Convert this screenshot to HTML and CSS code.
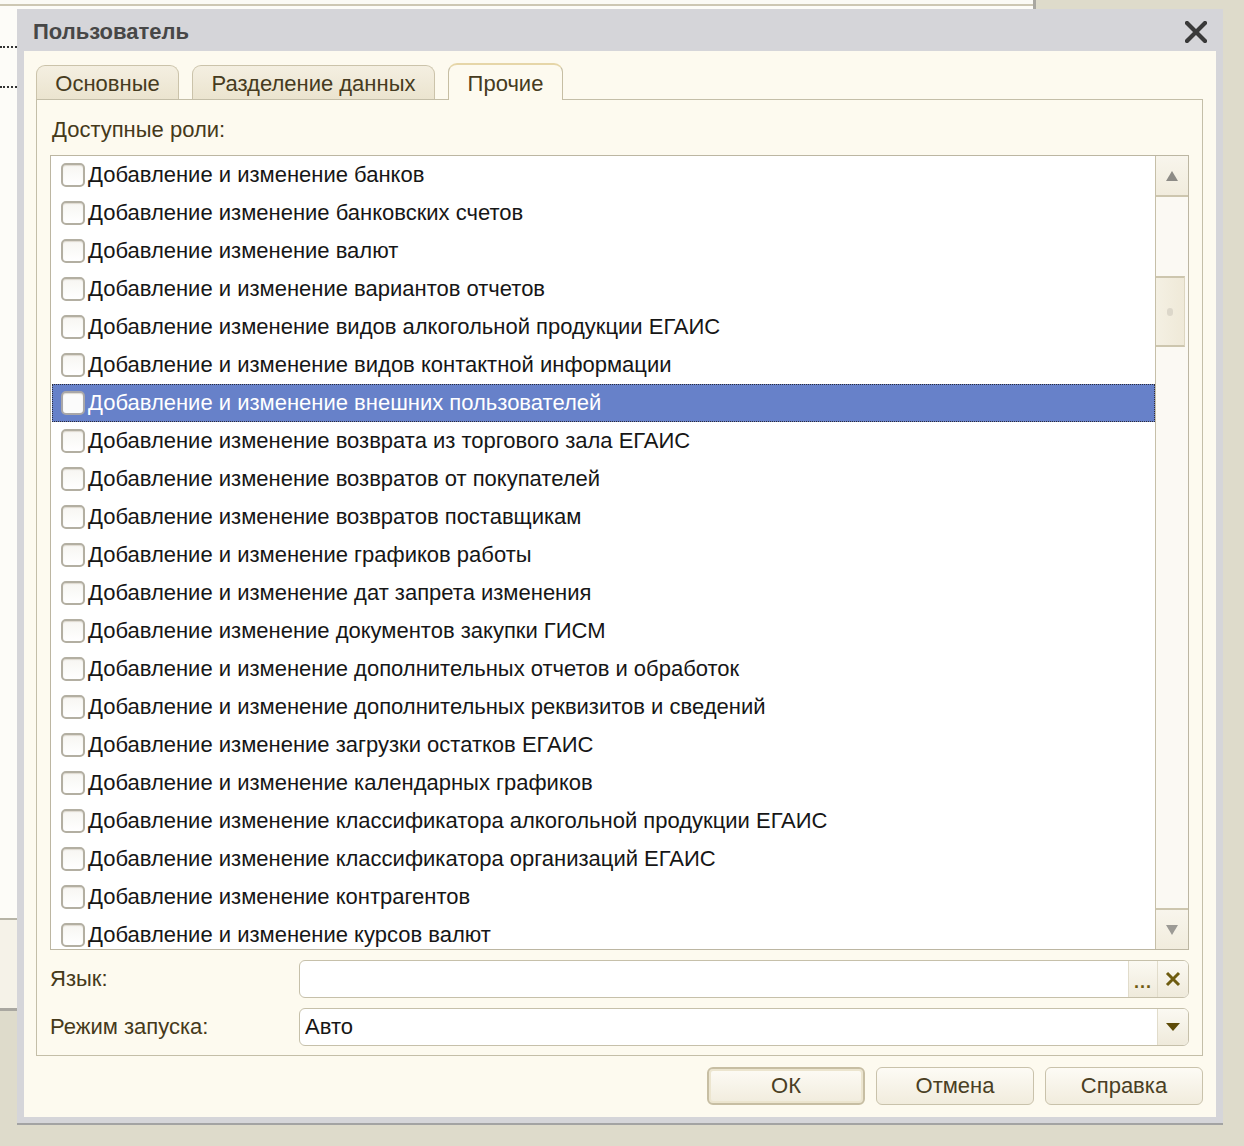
FILE: index.html
```html
<!DOCTYPE html>
<html lang="ru">
<head>
	<meta charset="UTF-8">
	<title>Пользователь</title>
	<link rel="stylesheet" href="styles.css">
</head>
<body>
	<!-- окно под диалогом -->
	<div class="backWindow">
		<div class="backTop"></div>
		<div class="backMain">
			<div class="treeDots"></div>
			<div class="treeDots"></div>
		</div>
		<div class="backFooter"></div>
	</div>

	<!-- Диалог -->
	<div class="dialog">
		<div class="titlebar">
			<span class="title">Пользователь</span>
			<svg class="closeIcon" width="22" height="22" viewBox="0 0 22 22">
				<path d="M2 2 L20 20 M20 2 L2 20" stroke="#3a3a3a" stroke-width="4.2" stroke-linecap="square"/>
			</svg>
		</div>

		<div class="content">
			<div class="tabs">
				<div class="tab tab-main">Основные</div>
				<div class="tab tab-data">Разделение данных</div>
				<div class="tab tab-other active">Прочие</div>
			</div>

			<div class="panel">
				<div class="panelLabel">Доступные роли:</div>

				<div class="roleList">
					<ul class="rows">
						<li><span class="check"></span>Добавление и изменение банков</li>
						<li><span class="check"></span>Добавление изменение банковских счетов</li>
						<li><span class="check"></span>Добавление изменение валют</li>
						<li><span class="check"></span>Добавление и изменение вариантов отчетов</li>
						<li><span class="check"></span>Добавление изменение видов алкогольной продукции ЕГАИС</li>
						<li><span class="check"></span>Добавление и изменение видов контактной информации</li>
						<li class="selected"><span class="check"></span>Добавление и изменение внешних пользователей</li>
						<li><span class="check"></span>Добавление изменение возврата из торгового зала ЕГАИС</li>
						<li><span class="check"></span>Добавление изменение возвратов от покупателей</li>
						<li><span class="check"></span>Добавление изменение возвратов поставщикам</li>
						<li><span class="check"></span>Добавление и изменение графиков работы</li>
						<li><span class="check"></span>Добавление и изменение дат запрета изменения</li>
						<li><span class="check"></span>Добавление изменение документов закупки ГИСМ</li>
						<li><span class="check"></span>Добавление и изменение дополнительных отчетов и обработок</li>
						<li><span class="check"></span>Добавление и изменение дополнительных реквизитов и сведений</li>
						<li><span class="check"></span>Добавление изменение загрузки остатков ЕГАИС</li>
						<li><span class="check"></span>Добавление и изменение календарных графиков</li>
						<li><span class="check"></span>Добавление изменение классификатора алкогольной продукции ЕГАИС</li>
						<li><span class="check"></span>Добавление изменение классификатора организаций ЕГАИС</li>
						<li><span class="check"></span>Добавление изменение контрагентов</li>
						<li><span class="check"></span>Добавление и изменение курсов валют</li>
					</ul>
					<div class="scrollbar">
						<div class="scrollBtn">
							<svg width="14" height="12" viewBox="0 0 14 12"><path d="M7 1 L13 11 L1 11 Z" fill="#8d8b86"/></svg>
						</div>
						<div class="scrollTrack">
							<div class="scrollThumb"><span class="grip"></span></div>
						</div>
						<div class="scrollBtn down">
							<svg width="14" height="12" viewBox="0 0 14 12"><path d="M1 1 L13 1 L7 11 Z" fill="#9c9a95"/></svg>
						</div>
					</div>
				</div>

				<div class="formRow">
					<label>Язык:</label>
					<div class="field">
						<span class="fieldText"></span>
						<span class="fieldBtn dots">...</span>
						<span class="fieldBtn clear">
							<svg width="16" height="16" viewBox="0 0 16 16"><path d="M2 2 L14 14 M14 2 L2 14" stroke="#6e5c10" stroke-width="3"/></svg>
						</span>
					</div>
				</div>
				<div class="formRow">
					<label>Режим запуска:</label>
					<div class="field">
						<span class="fieldText">Авто</span>
						<span class="fieldBtn drop">
							<svg width="16" height="10" viewBox="0 0 16 10"><path d="M1 1 L15 1 L8 9 Z" fill="#5e4b08"/></svg>
						</span>
					</div>
				</div>
			</div>

			<div class="buttons">
				<button class="default">ОК</button>
				<button>Отмена</button>
				<button>Справка</button>
			</div>
		</div>
	</div>
</body>
</html>
```

FILE: styles.css
```css
body {
	margin: 0;
	background: #dedbcb;
	font-family: "Liberation Sans", Arial, sans-serif;
	width: 1244px;
	height: 1146px;
	overflow: hidden;
}

/* фоновое окно */
.backWindow {
	position: absolute;
	left: 0;
	top: 0;
	width: 1033px;
	height: 1008px;
	display: flex;
	flex-direction: column;
	border-right: 3px solid #a9a7a0;
	border-bottom: 3px solid #a9a7a0;
}
.backTop {
	height: 4px;
	background: #fbfaf5;
	border-bottom: 2px solid #cdc7b3;
}
.backMain {
	flex: 1;
	background: #fdfcf8;
	border-bottom: 2px solid #b7b4a6;
	padding-top: 40px;
}
.treeDots {
	width: 17px;
	border-top: 2px dotted #333;
	margin-bottom: 38px;
}
.backFooter {
	height: 88px;
	background: #f5f2e8;
}

/* диалог */
.dialog {
	position: absolute;
	left: 17px;
	top: 9px;
	width: 1206px;
	height: 1116px;
	box-sizing: border-box;
	background: #d5d5d9;
	padding: 0 7px 6px 7px;
	border-bottom: 2px solid #a3a3a3;
	display: flex;
	flex-direction: column;
}
.titlebar {
	height: 42px;
	box-sizing: border-box;
	display: flex;
	align-items: center;
	justify-content: space-between;
	padding: 3px 9px 0 9px;
}
.title {
	font-weight: bold;
	font-size: 22px;
	color: #474747;
}
.closeIcon {
	display: block;
}

.content {
	flex: 1;
	background: #fdfaef;
	padding: 12px 13px 12px 12px;
	display: flex;
	flex-direction: column;
}

/* вкладки */
.tabs {
	display: flex;
	align-items: flex-end;
	gap: 13px;
	height: 36px;
	position: relative;
	z-index: 1;
}
.tab {
	box-sizing: border-box;
	height: 34px;
	border: 1px solid #cbc3aa;
	border-bottom: none;
	border-radius: 9px 9px 0 0;
	background: linear-gradient(#f4efe1, #ebe4cf);
	color: #463b20;
	font-size: 22px;
	display: flex;
	align-items: center;
	justify-content: center;
	padding-top: 2px;
}
.tab-main { width: 143px; }
.tab-data { width: 243px; }
.tab-other { width: 115px; }
.tab.active {
	height: 37px;
	margin-bottom: -1px;
	background: #fdfaef;
	border-color: #c6bea3;
	border-top: 2px solid #e6d6a8;
}

.panel {
	flex: 1;
	border: 1px solid #c4bea8;
	padding: 18px 13px 9px 13px;
	display: flex;
	flex-direction: column;
}
.panelLabel {
	font-size: 22px;
	line-height: 24px;
	color: #45391a;
	padding-left: 2px;
	margin-bottom: 13px;
}

/* список ролей */
.roleList {
	height: 795px;
	box-sizing: border-box;
	border: 1px solid #bcb6a2;
	background: #fff;
	display: flex;
}
.rows {
	flex: 1;
	list-style: none;
	margin: 0;
	padding: 0 0 0 1px;
	overflow: hidden;
}
.rows li {
	box-sizing: border-box;
	height: 38px;
	display: flex;
	align-items: center;
	padding-left: 8px;
	font-size: 22px;
	color: #161616;
	white-space: nowrap;
	border: 1px solid transparent;
}
.rows li.selected {
	background: #6781c9;
	color: #fff;
	border: 1px dotted #2c2c3a;
}
.check {
	box-sizing: border-box;
	width: 24px;
	height: 24px;
	border: 2px solid #b3afa2;
	border-radius: 5px;
	background: linear-gradient(#f7f6f2, #fff);
	box-shadow: inset 0 1px 1px #dedad0;
	margin-right: 3px;
	flex: none;
}
.selected .check {
	border-color: #a9a7a8;
	background: #fbfbfb;
}

.scrollbar {
	width: 32px;
	border-left: 1px solid #c6bfa8;
	display: flex;
	flex-direction: column;
	background: #fbf9f3;
}
.scrollBtn {
	height: 41px;
	box-sizing: border-box;
	background: linear-gradient(#f8f5ec, #f1ecdd);
	border-bottom: 2px solid #cdc6ae;
	display: flex;
	align-items: center;
	justify-content: center;
}
.scrollBtn.down {
	border-bottom: none;
	border-top: 2px solid #cdc6ae;
}
.scrollTrack {
	flex: 1;
	padding-top: 79px;
}
.scrollThumb {
	width: 29px;
	height: 71px;
	box-sizing: border-box;
	border-top: 2px solid #cdc6ae;
	border-bottom: 2px solid #cdc6ae;
	border-right: 1px solid #ddd6c0;
	background: linear-gradient(90deg, #f4f0e3, #efe9d8);
	display: flex;
	align-items: center;
	justify-content: center;
}
.grip {
	width: 6px;
	height: 8px;
	border-radius: 4px;
	background: #dcd7ca;
}

/* поля */
.formRow {
	display: grid;
	grid-template-columns: 249px 1fr;
	align-items: center;
	margin-top: 10px;
}
.formRow label {
	font-size: 22px;
	color: #45391a;
}
.field {
	height: 38px;
	box-sizing: border-box;
	border: 1px solid #c6c0aa;
	border-radius: 6px;
	background: #fff;
	display: flex;
	overflow: hidden;
}
.fieldText {
	flex: 1;
	font-size: 22px;
	color: #161616;
	padding-left: 5px;
	display: flex;
	align-items: center;
}
.fieldBtn {
	background: linear-gradient(#fbf9f2, #efeadb);
	border-left: 1px solid #e1dccb;
	display: flex;
	align-items: center;
	justify-content: center;
}
.fieldBtn.dots {
	width: 29px;
	color: #6e5c10;
	font-weight: bold;
	font-size: 18px;
	align-items: flex-end;
	padding-bottom: 4px;
	box-sizing: border-box;
	letter-spacing: 1px;
}
.fieldBtn.clear { width: 30px; }
.fieldBtn.drop { width: 30px; }

/* кнопки */
.buttons {
	display: flex;
	justify-content: flex-end;
	gap: 11px;
	margin-top: 11px;
}
.buttons button {
	width: 158px;
	height: 38px;
	border: 1px solid #c9c2ab;
	border-radius: 6px;
	background: linear-gradient(#fdfbf5, #f1ecdd);
	font-family: "Liberation Sans", Arial, sans-serif;
	font-size: 22px;
	color: #4a3f24;
	padding: 0;
}
.buttons button.default {
	border: 2px solid #c7bea3;
	box-shadow: inset 0 0 0 2px #ece5cf;
}
```
